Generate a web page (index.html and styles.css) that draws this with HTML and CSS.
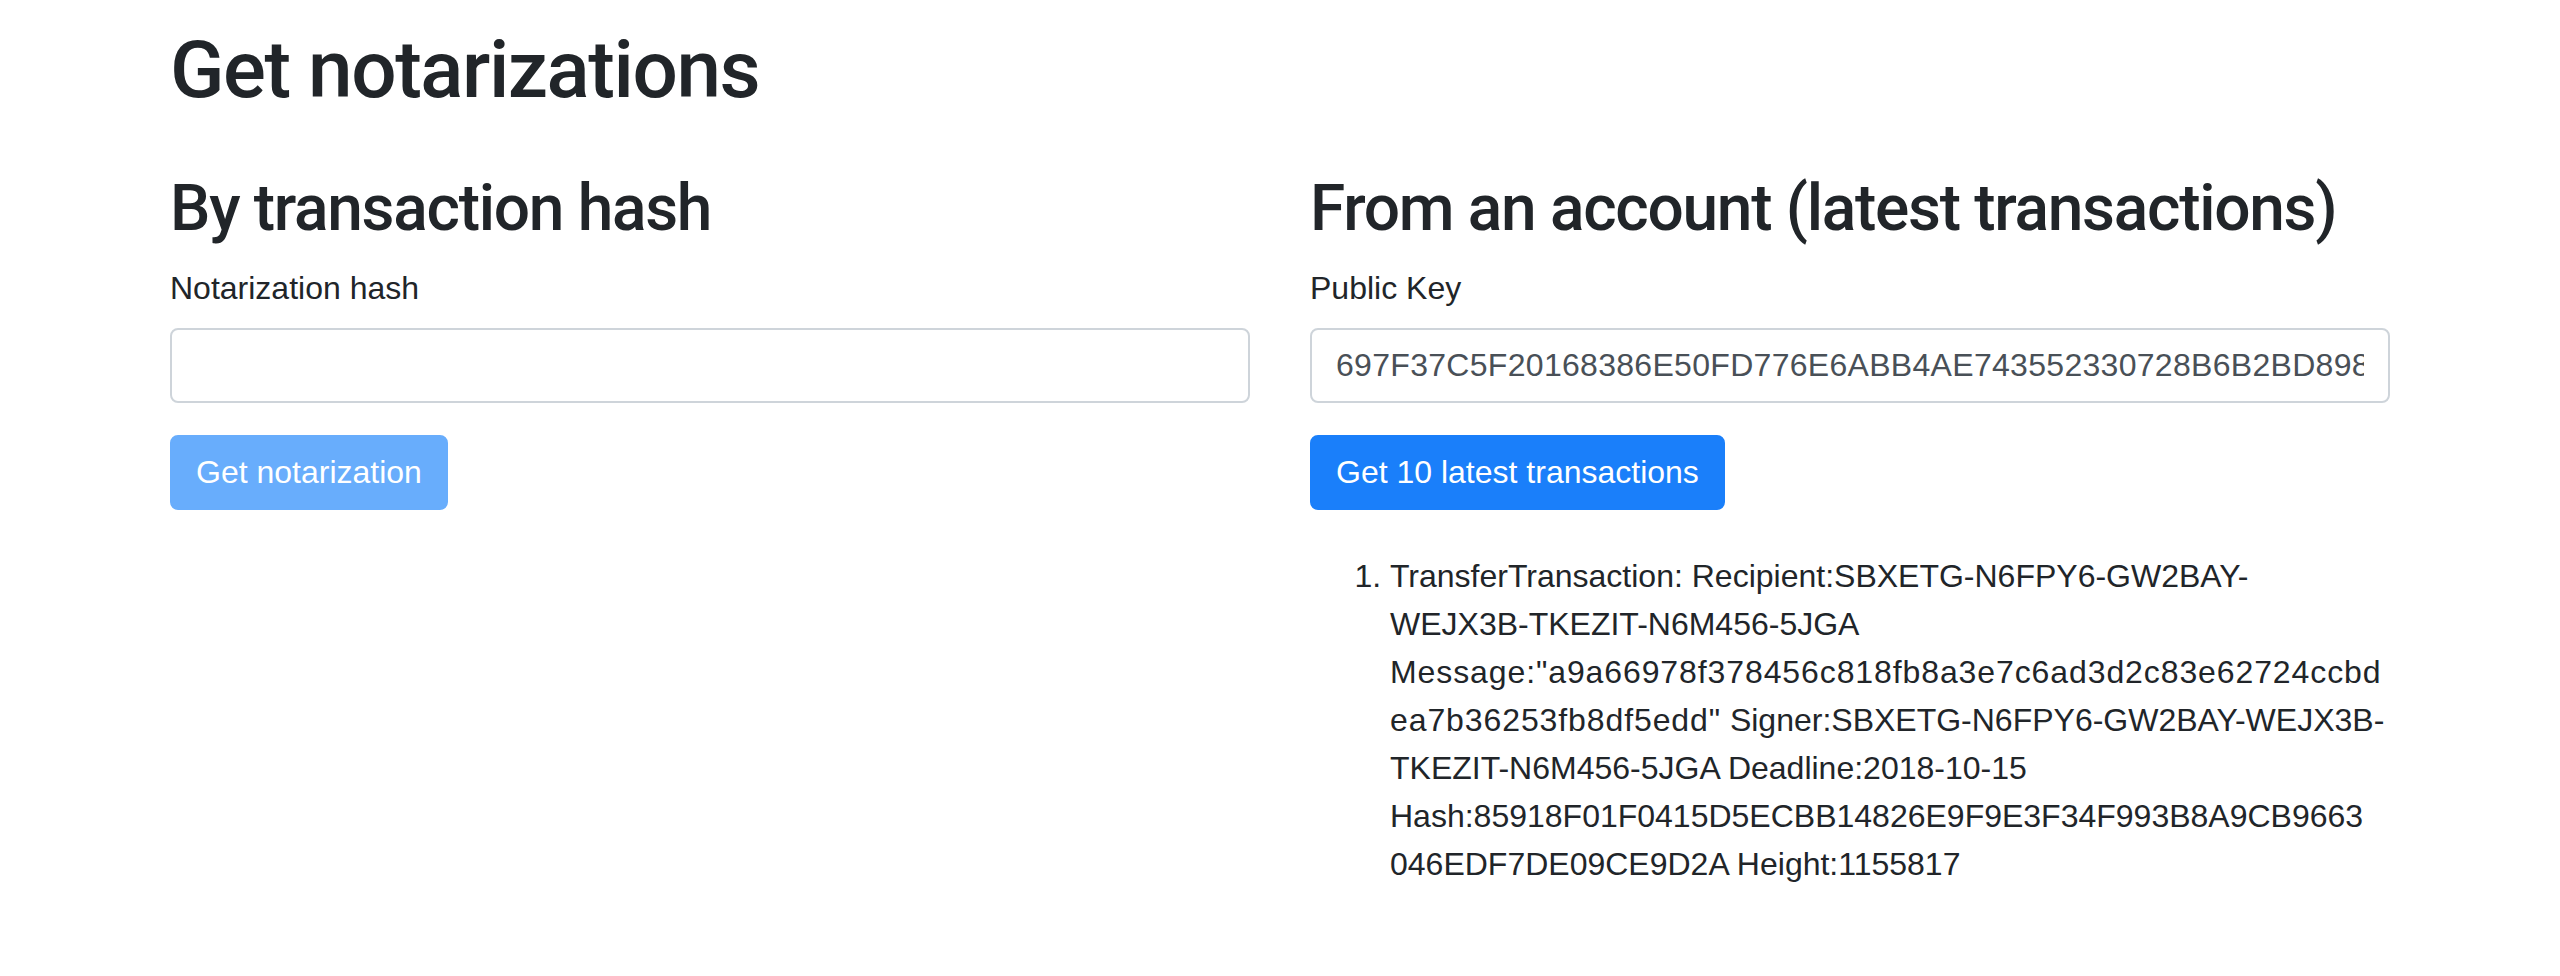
FILE: index.html
```html
<!DOCTYPE html>
<html lang="en">
<head>
<meta charset="utf-8">
<title>Get notarizations</title>
<link rel="stylesheet" href="styles.css">
</head>
<body>
<div class="container">
  <h1 class="title">Get notarizations</h1>
  <div class="row">
    <div class="col">
      <h2 class="subtitle">By transaction hash</h2>
      <div class="form-group">
        <label class="label" for="hash">Notarization hash</label>
        <input class="input" id="hash" type="text" value="">
      </div>
      <button class="btn btn-disabled" type="button" disabled>Get notarization</button>
    </div>
    <div class="col">
      <h2 class="subtitle">From an account (latest transactions)</h2>
      <div class="form-group">
        <label class="label" for="pk">Public Key</label>
        <input class="input input-mono" id="pk" type="text" value="697F37C5F20168386E50FD776E6ABB4AE743552330728B6B2BD8987D5F53B4FB">
      </div>
      <button class="btn btn-primary" type="button">Get 10 latest transactions</button>
      <ol class="tx-list">
        <li>TransferTransaction: Recipient:SBXETG-N6FPY6-GW2BAY-<br>WEJX3B-TKEZIT-N6M456-5JGA<br><span class="lower-hex">Message:"a9a66978f378456c818fb8a3e7c6ad3d2c83e62724ccbd</span><br><span class="lower-hex">ea7b36253fb8df5edd"</span> Signer:SBXETG-N6FPY6-GW2BAY-WEJX3B-<br>TKEZIT-N6M456-5JGA Deadline:2018-10-15<br>Hash:85918F01F0415D5ECBB14826E9F9E3F34F993B8A9CB9663<br>046EDF7DE09CE9D2A Height:1155817</li>
      </ol>
    </div>
  </div>
</div>
</body>
</html>
```

FILE: styles.css
```css
* { box-sizing: border-box; }

body {
  margin: 0;
  background: #ffffff;
  color: #212529;
  font-family: "Liberation Sans", Arial, sans-serif;
  font-size: 32px;
  line-height: 1.5;
}

.container {
  max-width: 2280px;
  margin: 0 auto;
  padding: 22px 30px 0;
}

.title {
  margin: 0 0 16px;
  font-family: Roboto, "Liberation Sans", sans-serif;
  font-weight: 500;
  font-size: 80px;
  line-height: 1.2;
  letter-spacing: -0.018em;
}

.row {
  display: flex;
  margin: 53px -30px 0;
}

.col {
  flex: 1 1 0;
  padding: 0 30px;
  min-width: 0;
}

.subtitle {
  margin: 0 0 16px;
  font-family: Roboto, "Liberation Sans", sans-serif;
  font-weight: 500;
  font-size: 64px;
  line-height: 1.2;
  letter-spacing: -0.02em;
}

.form-group {
  margin-bottom: 32px;
}

.label {
  display: inline-block;
  margin-bottom: 16px;
}

.input {
  display: block;
  width: 100%;
  height: 75px;
  padding: 12px 24px;
  font-family: "Liberation Sans", Arial, sans-serif;
  font-size: 32px;
  line-height: 1.5;
  color: #495057;
  background: #fff;
  border: 2px solid #ced4da;
  border-radius: 8px;
  outline: none;
}

.input-mono {
  letter-spacing: 0.3px;
}

.btn {
  display: inline-block;
  height: 75px;
  padding: 10px 24px;
  font-family: "Liberation Sans", Arial, sans-serif;
  font-size: 32px;
  line-height: 1.5;
  color: #fff;
  border: 2px solid transparent;
  border-radius: 8px;
}

.btn-primary {
  background: #1a7ffa;
  border-color: #1a7ffa;
}

.btn-disabled {
  background: #68adfc;
  border-color: #68adfc;
}

.tx-list {
  margin: 42px 0 32px;
  padding-left: 80px;
}

.tx-list li {
  line-height: 48px;
}

.lower-hex {
  letter-spacing: 0.9px;
}
```
